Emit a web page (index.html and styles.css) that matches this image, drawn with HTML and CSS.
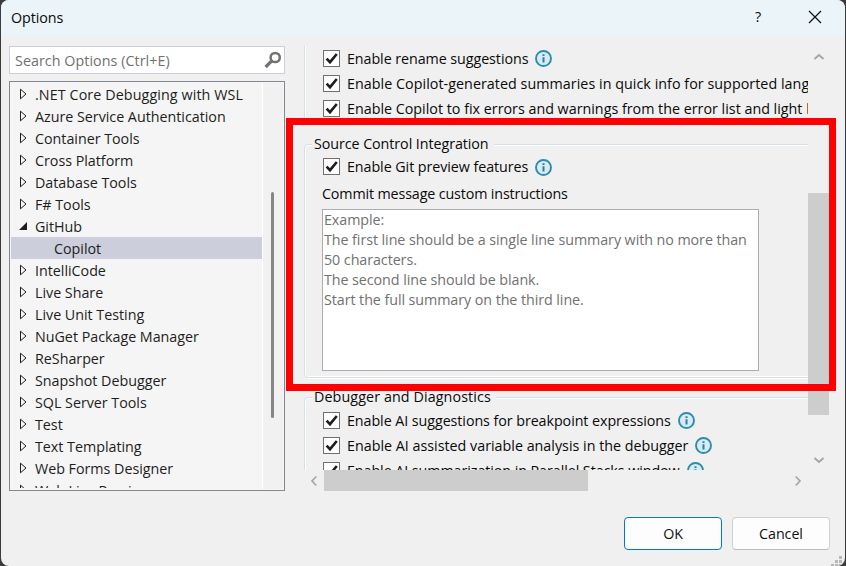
FILE: index.html
```
<!DOCTYPE html>
<html lang="en">
<head>
<meta charset="utf-8">
<title>Options</title>
<link rel="stylesheet" href="styles.css">
</head>
<body>
<svg class="defs" width="0" height="0">
  <symbol id="check" viewBox="0 0 17 17"><rect x=".5" y=".5" width="16" height="16" fill="#fff" stroke="#707070"/><path d="M3.6 8.6 7 12.2 13.8 4" fill="none" stroke="#1e1e1e" stroke-width="2.6"/></symbol>
  <symbol id="info" viewBox="0 0 17 17"><circle cx="8.5" cy="8.5" r="7.5" fill="#d9eaf0" stroke="#2b8cad" stroke-width="1.9"/><path d="M8.5 7.2V12.6M8.5 4.2V6" stroke="#1f86a9" stroke-width="2"/></symbol>
  <symbol id="closed" viewBox="0 0 8 12"><path d="M1.5 1.2 7 6 1.5 10.8Z" fill="none" stroke="#1e1e1e"/></symbol>
  <symbol id="open" viewBox="0 0 8 12"><path d="M8 2V10H0Z" fill="#1e1e1e"/></symbol>
</svg>
<div class="window">
  <header class="titlebar">
    <span class="title">Options</span>
    <span class="help">?</span>
    <svg class="close" width="14" height="14" viewBox="0 0 14 14"><path d="M1 1 13 13M13 1 1 13" stroke="#111" stroke-width="1.2"/></svg>
  </header>
  <main class="content">
    <aside class="sidebar">
      <div class="search"><span>Search Options (Ctrl+E)</span>
        <svg width="18" height="18" viewBox="0 0 18 18"><circle cx="11.2" cy="6.5" r="4.6" fill="none" stroke="#717171" stroke-width="2.5"/><path d="M8 9.7 1.6 16" stroke="#717171" stroke-width="3.2"/></svg>
      </div>
      <div class="tree">
        <ul class="nodes">
          <li><svg><use href="#closed"/></svg><span class="wide">.NET Core Debugging with WSL</span></li>
          <li><svg><use href="#closed"/></svg><span>Azure Service Authentication</span></li>
          <li><svg><use href="#closed"/></svg><span>Container Tools</span></li>
          <li><svg><use href="#closed"/></svg><span>Cross Platform</span></li>
          <li><svg><use href="#closed"/></svg><span>Database Tools</span></li>
          <li><svg><use href="#closed"/></svg><span>F# Tools</span></li>
          <li><svg><use href="#open"/></svg><span>GitHub</span></li>
          <li class="selected"><span>Copilot</span></li>
          <li><svg><use href="#closed"/></svg><span>IntelliCode</span></li>
          <li><svg><use href="#closed"/></svg><span>Live Share</span></li>
          <li><svg><use href="#closed"/></svg><span>Live Unit Testing</span></li>
          <li><svg><use href="#closed"/></svg><span>NuGet Package Manager</span></li>
          <li><svg><use href="#closed"/></svg><span>ReSharper</span></li>
          <li><svg><use href="#closed"/></svg><span>Snapshot Debugger</span></li>
          <li><svg><use href="#closed"/></svg><span>SQL Server Tools</span></li>
          <li><svg><use href="#closed"/></svg><span>Test</span></li>
          <li><svg><use href="#closed"/></svg><span>Text Templating</span></li>
          <li><svg><use href="#closed"/></svg><span>Web Forms Designer</span></li>
          <li><svg><use href="#closed"/></svg><span>Web Live Preview</span></li>
        </ul>
        <div class="tree-scroll"><i></i></div>
      </div>
    </aside>
    <section class="panel">
      <div class="viewport">
        <div class="group first">
          <div class="option"><svg><use href="#check"/></svg><span>Enable rename suggestions</span><svg><use href="#info"/></svg></div>
          <div class="option"><svg><use href="#check"/></svg><span class="quick">Enable Copilot-generated summaries in quick info for supported languages</span></div>
          <div class="option"><svg><use href="#check"/></svg><span class="fix">Enable Copilot to fix errors and warnings from the error list and light bulb</span></div>
        </div>
        <fieldset class="group source">
          <legend>Source Control Integration</legend>
          <div class="option"><svg><use href="#check"/></svg><span>Enable Git preview features</span><svg class="low"><use href="#info"/></svg></div>
          <div class="caption">Commit message custom instructions</div>
          <div class="instructions">Example:<br>The first line should be a single line summary with no more than<br>50 characters.<br>The second line should be blank.<br>Start the full summary on the third line.</div>
        </fieldset>
        <fieldset class="group debug">
          <legend class="wide">Debugger and Diagnostics</legend>
          <div class="option"><svg><use href="#check"/></svg><span>Enable AI suggestions for breakpoint expressions</span><svg><use href="#info"/></svg></div>
          <div class="option"><svg><use href="#check"/></svg><span class="fix">Enable AI assisted variable analysis in the debugger</span><svg><use href="#info"/></svg></div>
          <div class="option"><svg><use href="#check"/></svg><span>Enable AI summarization in Parallel Stacks window</span><svg><use href="#info"/></svg></div>
        </fieldset>
      </div>
      <div class="vscroll">
        <svg width="12" height="8" viewBox="0 0 12 8"><path d="M1.5 6 6 2 10.5 6" fill="none" stroke="#a6a6a6" stroke-width="2"/></svg>
        <i></i>
        <svg width="12" height="8" viewBox="0 0 12 8"><path d="M1.5 2 6 6 10.5 2" fill="none" stroke="#a6a6a6" stroke-width="2"/></svg>
      </div>
      <div class="hscroll">
        <svg width="8" height="12" viewBox="0 0 8 12"><path d="M6.3 1.5 2 6 6.3 10.5" fill="none" stroke="#a6a6a6" stroke-width="1.7"/></svg>
        <i></i>
        <svg width="8" height="12" viewBox="0 0 8 12"><path d="M1.7 1.5 6 6 1.7 10.5" fill="none" stroke="#a6a6a6" stroke-width="1.7"/></svg>
      </div>
    </section>
  </main>
  <footer class="actions"><button class="primary">OK</button><button>Cancel</button></footer>
  <svg class="grip" width="12" height="12" viewBox="0 0 12 12"><path d="M8 0h3v3H8zM4 4h3v3H4zM8 4h3v3H8zM0 8h3v3H0zM4 8h3v3H4zM8 8h3v3H8z" fill="#b8b8b8"/></svg>
  <div class="highlight"></div>
</div>
</body>
</html>
```
FILE: styles.css
```
* { box-sizing: border-box; }
body { margin: 0; width: 846px; height: 566px; overflow: hidden; background: #3b3b3d; padding: 0 1px; font: 14.3px/20px "Open Sans", "Noto Sans", sans-serif; letter-spacing: -.07px; color: #0a0a0a; }
.defs { position: absolute; }
svg { display: block; flex: none; }
.window { position: relative; width: 844px; height: 566px; background: #f0f0f0; border-radius: 8px; overflow: hidden; }
.titlebar { height: 36px; background: #ebf4f8; display: flex; align-items: center; padding: 0 23px 2px 10px; }
.title { flex: 1; padding-top: 1px; }
.help { margin-right: 47px; }
.content { display: flex; height: 455px; padding: 10px 15px 0 8px; }
.sidebar { width: 276px; display: flex; flex-direction: column; gap: 7px; }
.search { height: 28px; border: 1px solid #cccedb; background: #fff; display: flex; align-items: center; justify-content: space-between; padding: 1px 2px 0 5px; color: #717171; letter-spacing: .05px; }
.search svg { margin-top: -1px; }
.tree { height: 410px; border: 1px solid #828790; background: #f5f5f5; display: flex; padding: 1px; overflow: hidden; color: #1e1e1e; letter-spacing: -.02px; }
.nodes { list-style: none; margin: 0; padding: 0; width: 251px; height: 405px; overflow: hidden; }
.nodes li { height: 22px; display: flex; align-items: center; padding-left: 8px; white-space: nowrap; }
.nodes span { padding-top: 2px; }
.nodes svg { width: 8px; height: 12px; margin-right: 8px; }
.nodes .selected { background: #cccedb; padding-left: 43px; }
.tree-scroll { flex: 1; border-left: 1px solid #fff; background: #f1f1f1; padding: 109px 0 0 8px; }
.tree-scroll i { display: block; width: 3px; height: 226px; border-radius: 2px; background: #868686; }
.panel { margin-left: 19px; display: grid; grid-template: 424px 21px / 504px 21px; }
.viewport { overflow: hidden; white-space: nowrap; display: flex; flex-direction: column; }
.group { width: 620px; margin: 0; border: 1px solid #d5dfe5; border-radius: 4px; box-shadow: inset 1px 1px #fff, inset -1px -1px #fff, 1px 1px #fff; padding: 0 0 0 17px; flex: none; min-width: 0; }
.first { height: 77px; border-top: 0; border-radius: 0; box-shadow: inset 1px 0 #fff; }
.option { height: 25px; display: flex; align-items: center; gap: 7px; padding-left: 1px; }
.option svg { width: 17px; height: 17px; }
.option .low { margin-top: 2px; }
.source { height: 244px; margin-top: 11px; }
.debug { height: 160px; margin-top: 9px; padding-top: 1px; }
legend { height: 20px; margin-left: -10px; padding: 0 5px 0 2px; background: #f0f0f0; }
.wide { letter-spacing: .1px; }
.quick { letter-spacing: .04px; }
.fix { letter-spacing: 0; }
.caption { height: 20px; margin-top: 5px; letter-spacing: -.14px; }
.instructions { width: 437px; height: 162px; border: 1px solid #abadb3; background: #fff; color: #717171; padding: 0 1px; margin-top: 5px; }
.vscroll { display: flex; flex-direction: column; align-items: center; padding-top: 7px; }
.vscroll i { width: 21px; height: 222px; margin: 132px 0 41px; background: #cdcdcd; }
.hscroll { display: flex; align-items: center; padding-left: 6px; }
.hscroll i { width: 264px; height: 21px; margin: 0 206px 0 6px; background: #cdcdcd; }
.actions { display: flex; justify-content: flex-end; gap: 10px; padding: 26px 15px 0 0; }
button { width: 98px; height: 33px; padding: 0; border: 1px solid #d0d0d0; border-bottom-color: #bbb; border-radius: 4px; background: #fdfdfd; font: inherit; letter-spacing: inherit; color: #111; }
.primary { border-color: #0078d4; }
.grip { position: absolute; right: 2px; bottom: -2px; }
.highlight { position: absolute; left: 285px; top: 118px; width: 550px; height: 273px; border: 7px solid #f00; }
```
